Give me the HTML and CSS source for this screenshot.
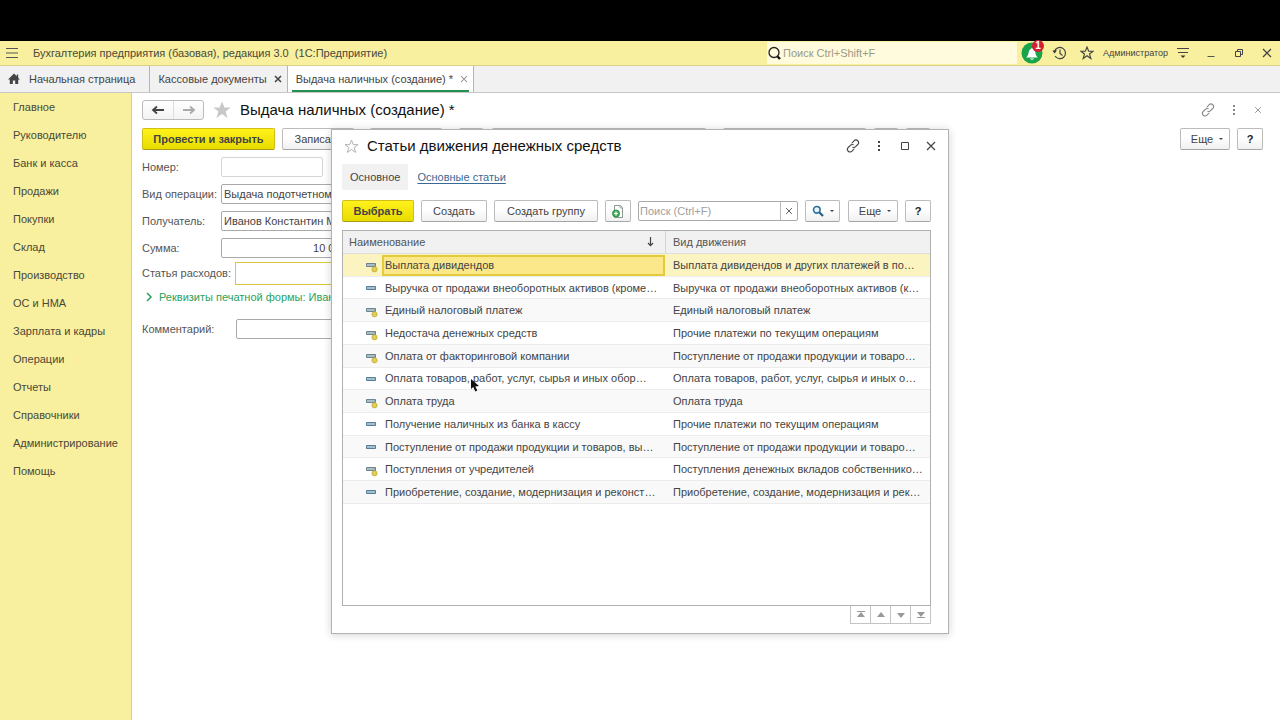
FILE: index.html
```html
<!DOCTYPE html>
<html lang="ru">
<head>
<meta charset="utf-8">
<title>Бухгалтерия предприятия</title>
<link rel="stylesheet" href="styles.css">
</head>
<body>
<svg class="defs" aria-hidden="true">
  <symbol id="link" viewBox="0 0 14 14"><g fill="none" stroke="currentColor" stroke-width="1.1" stroke-linecap="round"><path d="M6 4l2-2.200a2.600 2.600 0 0 1 3.800 3.700L9.600 7.700a2.600 2.600 0 0 1-2.800.6"/><path d="M8 10l-2 2.200a2.600 2.600 0 0 1-3.800-3.700L4.400 6.300a2.600 2.600 0 0 1 2.800-.6"/></g></symbol>
  <symbol id="dots" viewBox="0 0 14 14"><path fill="currentColor" d="M6 2h2v2H6zM6 6h2v2H6zM6 10h2v2H6z"/></symbol>
  <symbol id="close" viewBox="0 0 14 14"><path fill="none" stroke="currentColor" stroke-width="1.2" d="M3 3l8 8M11 3l-8 8"/></symbol>
  <symbol id="star" viewBox="0 0 20 20"><path d="M10 1.500l2.400 6h6.200l-5 3.900 1.900 6.500L10 14l-5.500 3.900 1.900-6.500-5-3.900h6.200z"/></symbol>
  <symbol id="item" viewBox="0 0 14 14"><path fill="#86a9bd" stroke="#557d96" d="M1.500 4.500h9v3h-9z"/><path stroke="#bcd6e2" d="M2 6h8"/></symbol>
  <symbol id="preset" viewBox="0 0 14 14"><path fill="#92a9b2" stroke="#6d858f" d="M1.500 4.500h9v3h-9z"/><path stroke="#c3d3d8" d="M2 6h7"/><circle cx="9.500" cy="10.300" r="2.600" fill="#e3cf4d" stroke="#b7a43b" stroke-width=".7"/></symbol>
</svg>
<div class="letterbox"></div>
<header class="titlebar">
  <button class="icon-btn menu" aria-label="Меню"><svg width="14" height="12" viewBox="0 0 14 12"><path stroke="#555" d="M1 1.500h12M1 6h12M1 10.500h12"/></svg></button>
  <span class="app-name">Бухгалтерия предприятия (базовая), редакция 3.0&nbsp; (1С:Предприятие)</span>
  <label class="global-search"><svg width="15" height="15" viewBox="0 0 15 15"><circle cx="7" cy="6.500" r="5" fill="none" stroke="#222" stroke-width="1.300"/><path stroke="#111" stroke-width="2.400" d="M10.500 10.500l2.500 2.500"/></svg><input type="text" placeholder="Поиск Ctrl+Shift+F" aria-label="Поиск"></label>
  <div class="sys">
    <button class="icon-btn bell" aria-label="Оповещения"><svg width="22" height="22" viewBox="0 0 22 22"><circle cx="11" cy="11" r="10.500" fill="#1ba34a"/><path fill="#fff" d="M5 15.500c3-2 2-5 3.500-7.500l2.500-2 2.500 2c1.500 2.500.5 5.500 3.500 7.500zM8.500 16.500h5l-2.500 1.500z"/></svg><span class="badge">1</span></button>
    <button class="icon-btn history" aria-label="История"><svg width="15" height="14" viewBox="0 0 15 14"><path fill="none" stroke="#444" stroke-width="1.200" d="M2.500 5.500a5.600 5.600 0 1 1 .6 4.500M8 3.500v4l2.500 2"/><path fill="#333" d="M.5 4.500l4.500 0-2.500 3z"/></svg></button>
    <button class="icon-btn fav" aria-label="Избранное"><svg width="14" height="14" fill="none" stroke="#444" stroke-width="1.600"><use href="#star"/></svg></button>
    <span class="user">Администратор</span>
    <button class="icon-btn filter" aria-label="Сервис"><svg width="14" height="14" viewBox="0 0 14 14"><path stroke="#444" stroke-width="1.200" d="M1 2.500h12M2 6.500h10"/><path fill="#333" d="M4.500 9.500h5L7 12z"/></svg></button>
    <button class="icon-btn win" aria-label="Свернуть"><svg width="14" height="14" viewBox="0 0 14 14"><path stroke="#555" d="M3.500 10.500h7"/></svg></button>
    <button class="icon-btn win" aria-label="Восстановить"><svg width="14" height="14" viewBox="0 0 14 14"><path fill="none" stroke="#444" d="M3.500 5.500h5v5h-5zM5.500 5V3.500h5v5H9"/></svg></button>
    <button class="icon-btn win" aria-label="Закрыть"><svg width="14" height="14" color="#444"><use href="#close"/></svg></button>
  </div>
</header>
<nav class="tabs">
  <a class="tab home" href="#"><svg width="12" height="12" viewBox="0 0 12 12"><path fill="#444" d="M6 .5L0 6.500h1.800V11h3V7.500h2.400V11h3V6.500H12L10.200 4.700V1.500H8.800v1.700z"/></svg>Начальная страница</a>
  <a class="tab" href="#">Кассовые документы<svg width="12" height="12" viewBox="0 0 14 14"><path stroke="#444" stroke-width="1.800" d="M3.500 3.500l7 7M10.500 3.500l-7 7"/></svg></a>
  <a class="tab active" href="#">Выдача наличных (создание) *<svg width="12" height="12" viewBox="0 0 14 14"><path stroke="#888" stroke-width="1.200" d="M3.500 3.500l7 7M10.500 3.500l-7 7"/></svg></a>
</nav>
<div class="body">
  <nav class="sidebar">
    <a href="#">Главное</a><a href="#">Руководителю</a><a href="#">Банк и касса</a><a href="#">Продажи</a><a href="#">Покупки</a><a href="#">Склад</a><a href="#">Производство</a><a href="#">ОС и НМА</a><a href="#">Зарплата и кадры</a><a href="#">Операции</a><a href="#">Отчеты</a><a href="#">Справочники</a><a href="#">Администрирование</a><a href="#">Помощь</a>
  </nav>
  <main class="main">
    <div class="form-head">
      <div class="nav-btns"><button aria-label="Назад"><svg width="14" height="10" viewBox="0 0 14 10"><path fill="none" stroke="#444" stroke-width="1.800" d="M13 5H2.500M6 1.500L2 5l4 3.500"/></svg></button><button aria-label="Вперед"><svg width="14" height="10" viewBox="0 0 14 10"><path fill="none" stroke="#aaa" stroke-width="1.800" d="M1 5h10.500M8 1.500L12 5 8 8.500"/></svg></button></div>
      <svg class="form-star" width="20" height="20" fill="#c8c8c8"><use href="#star"/></svg>
      <h1>Выдача наличных (создание) *</h1>
      <div class="form-tools"><svg width="14" height="14"><use href="#link"/></svg><svg width="14" height="14"><use href="#dots"/></svg><svg width="10" height="10" viewBox="0 0 14 14"><use href="#close"/></svg></div>
    </div>
    <div class="commands">
      <button class="btn primary post">Провести и закрыть</button>
      <button class="btn write">Записать</button>
      <div class="more-cmds">
        <button class="btn c-post" aria-label="Провести"></button><button class="btn c-icon" aria-label="Движения"></button><button class="btn c-print" aria-label="Печать"></button><button class="btn c-base" aria-label="Создать на основании"></button><button class="btn c-icon c-near" aria-label="Файлы"></button><button class="btn c-icon c-near" aria-label="Структура"></button>
      </div>
      <button class="btn more">Еще<i class="caret"></i></button>
      <button class="btn help">?</button>
    </div>
    <form class="fields">
      <div class="field"><label for="num">Номер:</label><input class="num" id="num" type="text"></div>
      <div class="field"><label for="op">Вид операции:</label><input id="op" type="text" value="Выдача подотчетному лицу"></div>
      <div class="field"><label for="rec">Получатель:</label><input id="rec" type="text" value="Иванов Константин Михайлович"></div>
      <div class="field"><label for="sum">Сумма:</label><input class="sum" id="sum" type="text" value="10 000,00"></div>
      <div class="field tight"><label class="wide" for="art">Статья расходов:</label><input class="current" id="art" type="text"></div>
      <a class="expander" href="#"><svg width="8" height="10" viewBox="0 0 8 10"><path fill="none" stroke="#2aa25a" stroke-width="1.500" d="M2 1l4 4-4 4"/></svg>Реквизиты печатной формы: Иванов Константин</a>
      <div class="field"><label class="wide" for="com">Комментарий:</label><input id="com" type="text"></div>
    </form>

    <section class="dialog" role="dialog" aria-labelledby="dlg-title">
      <div class="dlg-head">
        <svg width="15" height="15" fill="none" stroke="#aaa" stroke-width="1.200"><use href="#star"/></svg>
        <h2 id="dlg-title">Статьи движения денежных средств</h2>
        <div class="dlg-tools">
          <button class="icon-btn" aria-label="Ссылка"><svg width="14" height="14"><use href="#link"/></svg></button>
          <button class="icon-btn" aria-label="Меню"><svg width="14" height="14"><use href="#dots"/></svg></button>
          <button class="icon-btn" aria-label="Развернуть"><svg width="14" height="14" viewBox="0 0 14 14"><path fill="none" stroke="#444" d="M3.500 3.500h7v7h-7z"/></svg></button>
          <button class="icon-btn" aria-label="Закрыть"><svg width="14" height="14"><use href="#close"/></svg></button>
        </div>
      </div>
      <div class="dlg-nav"><span class="current-view">Основное</span><a href="#">Основные статьи</a></div>
      <div class="dlg-bar">
        <button class="btn primary pick">Выбрать</button>
        <button class="btn create">Создать</button>
        <button class="btn group">Создать группу</button>
        <button class="btn copy" aria-label="Скопировать"><svg width="14" height="15" viewBox="0 0 14 15"><path fill="#fff" stroke="#8a9a90" d="M3.500 1.500h6l2 2v10h-8z"/><path fill="#dde5df" stroke="#8a9a90" stroke-width=".7" d="M9 1.500V4h2.500"/><circle cx="5" cy="9.500" r="3.500" fill="#43ad59" stroke="#2b8f45"/><path stroke="#fff" stroke-width="1.200" d="M5 7.500v4M3 9.500h4"/></svg></button>
        <div class="list-search"><input type="text" placeholder="Поиск (Ctrl+F)" aria-label="Поиск (Ctrl+F)"><button aria-label="Очистить"><svg width="10" height="10" viewBox="0 0 14 14"><use href="#close"/></svg></button></div>
        <button class="btn find" aria-label="Найти"><svg width="12" height="12" viewBox="0 0 12 12"><circle cx="4.800" cy="4.800" r="3.300" fill="#e6f3fa" stroke="#2a7098" stroke-width="1.600"/><path stroke="#255f85" stroke-width="2.200" d="M7.500 7.500l3.500 3.500"/></svg><i class="caret"></i></button>
        <button class="btn more">Еще<i class="caret"></i></button>
        <button class="btn help">?</button>
      </div>
      <div class="list">
        <table>
          <colgroup><col class="col-name"><col></colgroup>
          <thead><tr><th><div class="th-sort">Наименование<svg width="9" height="10" viewBox="0 0 9 10"><path fill="none" stroke="#444" stroke-width="1.200" d="M4.500 0v8.500M2 6l2.500 2.700L7 6"/></svg></div></th><th>Вид движения</th></tr></thead>
          <tbody>
            <tr class="selected"><td class="name"><svg><use href="#preset"/></svg>Выплата дивидендов</td><td>Выплата дивидендов и других платежей в по…</td></tr>
            <tr><td class="name"><svg><use href="#item"/></svg>Выручка от продажи внеоборотных активов (кроме…</td><td>Выручка от продажи внеоборотных активов (к…</td></tr>
            <tr><td class="name"><svg><use href="#preset"/></svg>Единый налоговый платеж</td><td>Единый налоговый платеж</td></tr>
            <tr><td class="name"><svg><use href="#preset"/></svg>Недостача денежных средств</td><td>Прочие платежи по текущим операциям</td></tr>
            <tr><td class="name"><svg><use href="#preset"/></svg>Оплата от факторинговой компании</td><td>Поступление от продажи продукции и товаро…</td></tr>
            <tr><td class="name"><svg><use href="#item"/></svg>Оплата товаров, работ, услуг, сырья и иных обор…</td><td>Оплата товаров, работ, услуг, сырья и иных о…</td></tr>
            <tr><td class="name"><svg><use href="#preset"/></svg>Оплата труда</td><td>Оплата труда</td></tr>
            <tr><td class="name"><svg><use href="#item"/></svg>Получение наличных из банка в кассу</td><td>Прочие платежи по текущим операциям</td></tr>
            <tr><td class="name"><svg><use href="#item"/></svg>Поступление от продажи продукции и товаров, вы…</td><td>Поступление от продажи продукции и товаро…</td></tr>
            <tr><td class="name"><svg><use href="#preset"/></svg>Поступления от учредителей</td><td>Поступления денежных вкладов собственнико…</td></tr>
            <tr><td class="name"><svg><use href="#item"/></svg>Приобретение, создание, модернизация и реконст…</td><td>Приобретение, создание, модернизация и рек…</td></tr>
          </tbody>
        </table>
      </div>
      <div class="pager">
        <button aria-label="В начало"><svg viewBox="0 0 10 8"><path d="M1 0h8v1H1zM5 1l4 5H1z"/></svg></button><button aria-label="Вверх"><svg viewBox="0 0 10 8"><path d="M5 1l4 5H1z"/></svg></button><button aria-label="Вниз"><svg viewBox="0 0 10 8"><path d="M5 7L1 2h8z"/></svg></button><button aria-label="В конец"><svg viewBox="0 0 10 8"><path d="M5 6L1 1h8zM1 6h8v1H1z"/></svg></button>
      </div>
      <svg class="cursor" width="9" height="13" viewBox="0 0 9 13"><path fill="#111" d="M0 0v10l2.300-2 2 4.500 2-1-2-4L8 7z"/></svg>
    </section>
  </main>
</div>
</body>
</html>
```
FILE: styles.css
```css
* { box-sizing: border-box; }
body {
  margin: 0;
  min-height: 100vh;
  display: flex;
  flex-direction: column;
  font: 11px/16px "Liberation Sans", Arial, sans-serif;
  color: #444;
  background: #fff;
}
button, input { font: inherit; color: inherit; margin: 0; }
a { color: inherit; text-decoration: none; }
svg { display: block; flex: none; }
.defs { position: absolute; width: 0; height: 0; }
.icon-btn { border: 0; padding: 0; background: none; display: flex; align-items: center; justify-content: center; }
.letterbox { height: 41px; background: #000; }

.titlebar {
  height: 25px;
  display: flex;
  align-items: center;
  background: #f8f09f;
  border-bottom: 1px solid #d9d08c;
  padding: 0 6px 0 5px;
}
.menu { width: 14px; margin-right: 14px; }
.app-name { flex: 1; white-space: nowrap; color: #4b4838; }
.global-search {
  width: 250px;
  height: 22px;
  display: flex;
  align-items: center;
  background: #fffbdc;
}
.global-search input { flex: 1; min-width: 0; border: 0; padding: 0 1px; background: none; outline: 0; }
.global-search input::placeholder { color: #9b9a86; }
.sys { display: flex; align-items: center; }
.bell { position: relative; width: 22px; margin: 0 9px 0 4px; }
.badge {
  position: absolute;
  top: -2px;
  right: -1px;
  width: 12px;
  height: 12px;
  border-radius: 50%;
  background: #d21f34;
  color: #fff;
  font-weight: bold;
  font-size: 10px;
  line-height: 12px;
}
.history { margin-right: 13px; }
.user { font-size: 9px; margin: 0 8px 0 9px; }
.filter { margin-right: 14px; }
.win + .win { margin-left: 14px; }

.tabs {
  height: 27px;
  display: flex;
  background: #f1f1f1;
  border-bottom: 1px solid #c6c6c6;
}
.tab {
  display: flex;
  align-items: center;
  gap: 5px;
  padding: 0 3px 0 8px;
  border-right: 1px solid #b5b5b5;
  white-space: nowrap;
}
.home { gap: 9px; padding-right: 14px; }
.active { background: linear-gradient(#249150, #249150) 4px 100% / calc(100% - 8px) 2px no-repeat #fff; }

.body { flex: 1; display: flex; }
.sidebar {
  width: 132px;
  flex: none;
  display: flex;
  flex-direction: column;
  background: #f8f09f;
  border-right: 1px solid #d4cd95;
}
.sidebar a { line-height: 28px; padding-left: 13px; white-space: nowrap; color: #4b4838; }
.main { position: relative; flex: 1; min-width: 0; padding: 7px 17px 0 10px; }

.form-head { display: flex; align-items: center; height: 20px; }
.nav-btns { display: flex; border: 1px solid #bbb; border-radius: 3px; background: linear-gradient(#fff, #f3f3f3); }
.nav-btns button {
  width: 30px;
  height: 18px;
  display: flex;
  align-items: center;
  justify-content: center;
  padding: 0;
  border: 0;
  background: none;
}
.nav-btns button + button { border-left: 1px solid #ddd; }
.form-star { margin: 0 8px; }
h1, h2 { margin: 0; font-size: 15px; line-height: 20px; font-weight: normal; color: #111; white-space: nowrap; }
.form-tools { display: flex; align-items: center; gap: 12px; margin-left: auto; color: #888; }

.btn {
  height: 22px;
  flex: none;
  padding: 0;
  display: flex;
  align-items: center;
  justify-content: center;
  border: 1px solid #bcbcbc;
  border-bottom-color: #a5a5a5;
  border-radius: 2px;
  background: linear-gradient(#fff 40%, #f0f0f0);
  white-space: nowrap;
}
.primary {
  font-weight: bold;
  border-color: #d0bf18;
  border-bottom-color: #aa9c16;
  background: linear-gradient(#fff21c, #e9dc00);
}
.caret { margin-left: 6px; border: 2px solid transparent; border-top-color: #444; border-bottom: 0; }
.more { width: 50px; padding-left: 4px; }
.help { width: 26px; font-weight: bold; color: #222; }
.commands { display: flex; align-items: center; margin-top: 8px; }
.commands .help { margin-left: 7px; }
.post { width: 133px; }
.write { width: 72px; margin-left: 7px; }
.more-cmds { display: flex; flex: 1; min-width: 0; padding-left: 16px; }
.c-post { width: 72px; margin-right: 17px; }
.c-icon { width: 24px; }
.c-print { width: 214px; margin: 0 17px 0 9px; }
.c-base { width: 143px; }
.c-near { margin-left: 8px; }

.fields { padding-top: 3px; width: 570px; }
.field { display: flex; align-items: center; height: 27px; }
.field label { width: 79px; flex: none; white-space: nowrap; color: #555; }
.field label.wide { width: 94px; }
.field input {
  flex: 1;
  min-width: 0;
  height: 20px;
  padding: 0 2px;
  border: 1px solid #aaa;
  border-radius: 2px;
  background: #fff;
}
.field .num { flex: none; width: 102px; border-color: #d5d5d5; }
.field .sum { flex: none; width: 145px; padding-right: 3px; text-align: right; }
.tight { height: 24px; }
.field .current { height: 23px; border: 1px solid #dcc840; border-radius: 0; }
.field label[for="art"] { width: 93px; }
.expander { display: flex; align-items: center; gap: 6px; height: 24px; margin-bottom: 6px; padding-left: 3px; white-space: nowrap; color: #2aa25a; }

.dialog {
  position: absolute;
  left: 199px;
  top: 36px;
  width: 618px;
  padding: 6px 17px 9px 10px;
  background: #fff;
  border: 1px solid #b3b3b3;
  box-shadow: 0 1px 8px rgba(0, 0, 0, .18);
}
.dlg-head { display: flex; align-items: center; gap: 8px; height: 20px; padding-left: 2px; }
.dlg-tools { display: flex; gap: 12px; margin-left: auto; margin-right: -7px; color: #444; }
.dlg-nav { display: flex; align-items: center; gap: 9px; height: 27px; margin-top: 7px; line-height: 26px; }
.current-view { padding: 0 8px; background: #f1f1f1; border-radius: 2px; }
.dlg-nav a { color: #3a6a94; text-decoration: underline; text-underline-offset: 2px; }
.dlg-bar { display: flex; align-items: center; margin-top: 10px; }
.pick { width: 72px; }
.create { width: 66px; margin-left: 7px; }
.group { width: 104px; margin-left: 7px; }
.copy { width: 26px; margin: 0 7px; }
.list-search { display: flex; flex: 1; min-width: 0; height: 20px; border: 1px solid #aaa; border-radius: 2px; }
.list-search input { flex: 1; min-width: 0; border: 0; padding: 0 1px; outline: 0; background: none; }
.list-search input::placeholder { color: #a0a0a0; }
.list-search button {
  width: 17px;
  display: flex;
  align-items: center;
  justify-content: center;
  padding: 0;
  border: 0;
  border-left: 1px solid #bbb;
  background: none;
}
.find { width: 35px; margin: 0 8px 0 7px; }
.dlg-bar .help { margin-left: 7px; }

.list { height: 376px; margin-top: 8px; border: 1px solid #b0b0b0; }
table { width: 100%; height: 273px; table-layout: fixed; border-collapse: separate; border-spacing: 0; }
.col-name { width: 322px; }
th { height: 23px; padding: 0 6px; font-weight: normal; text-align: left; background: #f1f1f1; border-bottom: 1px solid #ddd; color: #555; }
th + th { border-left: 1px solid #d5d5d5; padding-left: 7px; }
.th-sort { display: flex; justify-content: space-between; align-items: center; padding-right: 4px; }
td {
  padding: 0 0 0 8px;
  line-height: 16px;
  border-bottom: 1px solid #ececec;
  white-space: nowrap;
}
tbody tr:nth-child(odd) { background: #f9f9f9; }
.name { position: relative; padding: 0 0 0 42px; }
.name svg { position: absolute; left: 22px; top: 5px; width: 14px; height: 14px; }
tbody tr.selected:nth-child(odd) { background: #fbf3c0; }
.selected .name {
  background:
    linear-gradient(#fbe88b, #fbe88b) 41px 3px / calc(100% - 43px) calc(100% - 5px) no-repeat,
    linear-gradient(#e4cb3c, #e4cb3c) 39px 1px / calc(100% - 39px) calc(100% - 1px) no-repeat;
}

.pager { display: flex; justify-content: flex-end; }
.pager button {
  width: 21px;
  height: 18px;
  display: flex;
  align-items: center;
  justify-content: center;
  padding: 0;
  border: 1px solid #c4c4c4;
  border-top: 0;
  background: #fff;
}
.pager button + button { margin-left: -1px; }
.pager svg { width: 10px; height: 8px; fill: #999; }
.cursor { position: absolute; left: 139px; top: 249px; }
```
